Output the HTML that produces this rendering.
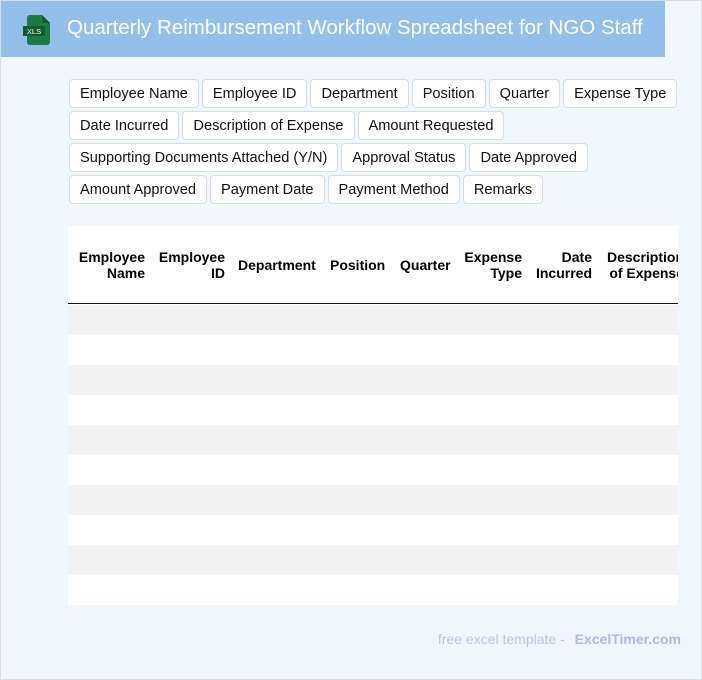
<!DOCTYPE html>
<html><head><style>
*{box-sizing:border-box;margin:0;padding:0}
body{width:702px;height:680px;overflow:hidden;background:#f0f7ff;font-family:"Liberation Sans",Arial,sans-serif;position:relative}
.frame{position:absolute;left:0;top:0;width:702px;height:680px;border:1px solid #d6dfe9}
.hdr{position:absolute;left:1px;top:1px;width:664px;height:56px;background:#92c0ea}
.hdr h1{position:absolute;left:66px;top:15px;font-weight:normal;font-size:20.5px;color:#fff;white-space:nowrap}
.tags{position:absolute;left:69px;top:79px;width:640px}
.r{white-space:nowrap;height:32px}
.tag{display:inline-block;height:29px;line-height:28px;padding:0 10px;background:#fff;border:1px solid #d5dde8;border-radius:4px;font-size:14.6px;color:#111;margin:0 3px 0 0;vertical-align:top}
.tbl{position:absolute;left:68px;top:226px;width:610px;height:379px;background:#fff;overflow:hidden}
.th{position:absolute;top:0;height:78px;border-bottom:1.5px solid #111;width:610px}
.th span{position:absolute;font-weight:bold;font-size:14px;color:#000;text-align:right;line-height:16px;white-space:nowrap}
.row{position:absolute;left:0;width:610px;height:30px}
.foot{position:absolute;right:21px;top:631px;font-size:14px;color:#b4c6ee}
.foot b{color:#a8bbea;margin-left:6px}
</style></head><body>
<div class="frame"></div>
<div class="hdr">
<svg style="position:absolute;left:21px;top:13px" width="30" height="32" viewBox="0 0 30 32">
<path d="M8 1h12l8 8v19a3 3 0 0 1-3 3H8a3 3 0 0 1-3-3V4a3 3 0 0 1 3-3z" fill="#1d7a45"/>
<path d="M20 1v8h8z" fill="#135c33"/>
<rect x="1" y="12" width="22" height="10" fill="#0f5e31"/>
<text x="12" y="20" font-size="7.5" fill="#fff" text-anchor="middle" font-family="Liberation Sans">XLS</text>
</svg>
<h1>Quarterly Reimbursement Workflow Spreadsheet for NGO Staff</h1>
</div>
<div class="tags">
<div class="r"><span class="tag">Employee Name</span><span class="tag">Employee ID</span><span class="tag">Department</span><span class="tag">Position</span><span class="tag">Quarter</span><span class="tag">Expense Type</span></div>
<div class="r"><span class="tag">Date Incurred</span><span class="tag">Description of Expense</span><span class="tag">Amount Requested</span></div>
<div class="r"><span class="tag">Supporting Documents Attached (Y/N)</span><span class="tag">Approval Status</span><span class="tag">Date Approved</span></div>
<div class="r"><span class="tag">Amount Approved</span><span class="tag">Payment Date</span><span class="tag">Payment Method</span><span class="tag">Remarks</span></div>
</div>
<div class="tbl">
<div class="th">
<span style="right:533px;top:23px">Employee<br>Name</span>
<span style="right:453px;top:23px">Employee<br>ID</span>
<span style="left:170px;top:31px">Department</span>
<span style="left:262px;top:31px">Position</span>
<span style="left:332px;top:31px">Quarter</span>
<span style="right:156px;top:23px">Expense<br>Type</span>
<span style="right:86px;top:23px">Date<br>Incurred</span>
<span style="left:539px;top:23px">Description<br>of Expense</span>
</div>
<div class="row" style="top:79px;background:#f3f3f3"></div>
<div class="row" style="top:139px;background:#f3f3f3"></div>
<div class="row" style="top:199px;background:#f3f3f3"></div>
<div class="row" style="top:259px;background:#f3f3f3"></div>
<div class="row" style="top:319px;background:#f3f3f3"></div>
</div>
<div class="foot">free excel template - <b>ExcelTimer.com</b></div>
</body></html>
